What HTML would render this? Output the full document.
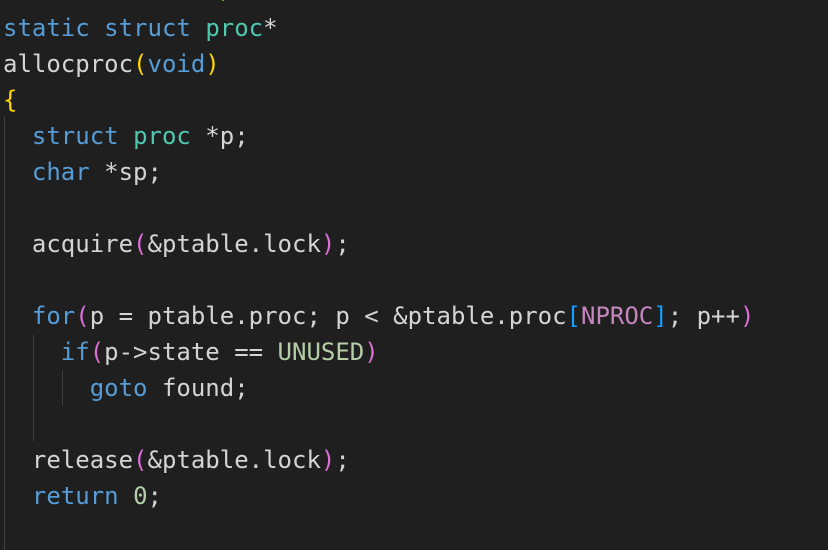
<!DOCTYPE html>
<html><head><meta charset="utf-8"><style>
html,body{margin:0;padding:0;background:#1f1f1f;width:828px;height:550px;overflow:hidden}
.c{position:absolute;left:3px;top:-26px;font-family:"DejaVu Sans Mono","Liberation Mono",monospace;font-size:24px;line-height:36px;color:#d4d4d4;white-space:pre}
.k{color:#569cd6}.t{color:#4ec9b0}.y{color:#ffd700}.p{color:#da70d6}.b{color:#179fff}.m{color:#c586c0}.n{color:#b5cea8}.g{color:#6a9955;position:relative;top:-4px}
.gd{position:absolute;width:1px;background:#404040}
</style></head><body>
<div class="gd" style="left:4px;top:117px;height:433px"></div>
<div class="gd" style="left:33px;top:335px;height:106px"></div>
<div class="gd" style="left:62px;top:371px;height:34px"></div>
<div class="c"><span class="g">// Look in the process table for</span>
<span class="k">static</span> <span class="k">struct</span> <span class="t">proc</span>*
allocproc<span class="y">(</span><span class="k">void</span><span class="y">)</span>
<span class="y">{</span>
  <span class="k">struct</span> <span class="t">proc</span> *p;
  <span class="k">char</span> *sp;

  acquire<span class="p">(</span>&amp;ptable.lock<span class="p">)</span>;

  <span class="k">for</span><span class="p">(</span>p = ptable.proc; p &lt; &amp;ptable.proc<span class="b">[</span><span class="m">NPROC</span><span class="b">]</span>; p++<span class="p">)</span>
    <span class="k">if</span><span class="p">(</span>p-&gt;state == <span class="n">UNUSED</span><span class="p">)</span>
      <span class="k">goto</span> found;

  release<span class="p">(</span>&amp;ptable.lock<span class="p">)</span>;
  <span class="k">return</span> <span class="n">0</span>;
</div>
</body></html>
